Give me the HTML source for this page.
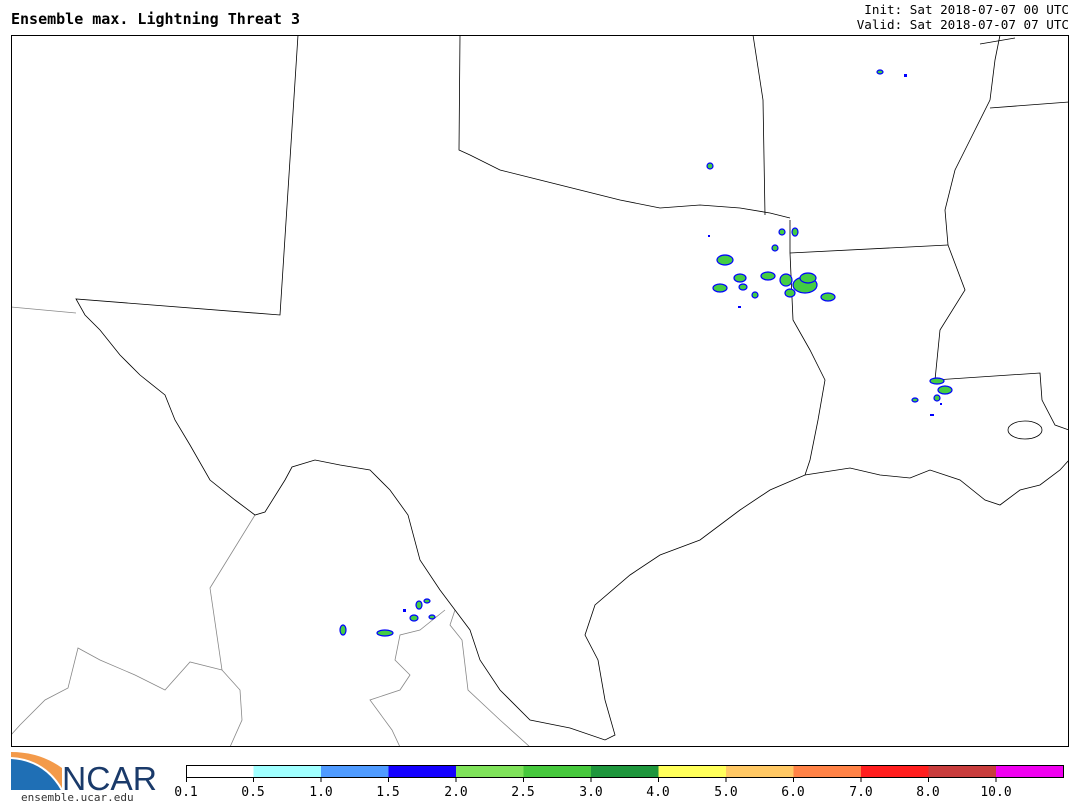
<!DOCTYPE html>
<html><head><meta charset="utf-8"><style>
body{margin:0;background:#fff;width:1080px;height:810px;overflow:hidden;position:relative;font-family:"DejaVu Sans Mono","Liberation Mono",monospace}
.t{position:absolute;font-size:14px;white-space:pre}
</style></head><body>
<div class="t" style="left:11px;top:10px;font-weight:bold;font-size:15px">Ensemble max. Lightning Threat 3</div>
<div class="t" style="right:11px;top:2px;font-size:12.6px;line-height:15px;text-align:right">Init: Sat 2018-07-07 00 UTC
Valid: Sat 2018-07-07 07 UTC</div>
<svg width="1080" height="810" style="position:absolute;left:0;top:0" xmlns="http://www.w3.org/2000/svg">
<defs><clipPath id="c"><rect x="11" y="35" width="1058" height="712"/></clipPath></defs>
<g clip-path="url(#c)" fill="none" stroke-width="0.8">
<g stroke="#888">
<polyline points="11,307 76,313"/>
<polyline points="255,515 210,588 222,670"/>
<polyline points="222,670 190,662 165,690 135,675 100,660 78,648 68,688 45,700 20,725 11,735"/>
<polyline points="222,670 240,690 242,720 230,747"/>
<polyline points="455,610 450,625 462,640 468,690 500,720 530,747"/>
<polyline points="445,610 420,630 400,635 395,660 410,675 400,690 370,700 392,730 400,747"/>
</g>
<g stroke="#000">
<polyline points="298,35 280,315 76,299 85,315 100,330 120,355 140,375 165,395 175,420 190,445 210,480 235,500 255,515 265,512 285,480 292,467 315,460 340,465 370,470 390,490 408,515 420,560 440,590 455,610 470,630 480,660 500,690 530,720 570,728 605,740 615,735 605,700 598,660 585,635 595,605 630,575 660,555 700,540 740,510 770,490 805,475 850,468 880,475 910,478 930,470 960,480 985,500 1000,505 1020,490 1040,485 1060,470 1069,460"/>
<polyline points="805,475 810,460 818,420 825,380 810,350 793,320 790,253 790,220"/>
<polyline points="790,218 770,213 740,208 700,205 660,208 620,200 580,190 540,180 500,170 470,155 459,150 460,35"/>
<polyline points="753,35 763,100 765,215"/>
<polyline points="790,253 948,245"/>
<polyline points="948,245 945,210 955,170 975,130 990,100 995,60 1000,35"/>
<polyline points="990,108 1069,102"/>
<polyline points="980,44 1015,38"/>
<polyline points="948,245 965,290 940,330 935,380 1040,373 1042,400 1055,425 1069,430"/>
<ellipse cx="1025" cy="430" rx="17" ry="9"/>
</g>
</g>
<g stroke="#00f" stroke-width="1.2" fill="#4c4">
<ellipse cx="725" cy="260" rx="8" ry="5"/><ellipse cx="740" cy="278" rx="6" ry="4"/><ellipse cx="720" cy="288" rx="7" ry="4"/>
<ellipse cx="768" cy="276" rx="7" ry="4"/><ellipse cx="786" cy="280" rx="6" ry="6"/><ellipse cx="805" cy="285" rx="12" ry="8"/>
<ellipse cx="828" cy="297" rx="7" ry="4"/><ellipse cx="808" cy="278" rx="8" ry="5"/><ellipse cx="775" cy="248" rx="3" ry="3"/>
<ellipse cx="795" cy="232" rx="3" ry="4"/><ellipse cx="782" cy="232" rx="3" ry="3"/><ellipse cx="755" cy="295" rx="3" ry="3"/>
<ellipse cx="790" cy="293" rx="5" ry="4"/><ellipse cx="743" cy="287" rx="4" ry="3"/><ellipse cx="710" cy="166" rx="3" ry="3"/>
<ellipse cx="880" cy="72" rx="3" ry="2"/><ellipse cx="937" cy="381" rx="7" ry="3"/><ellipse cx="945" cy="390" rx="7" ry="4"/>
<ellipse cx="915" cy="400" rx="3" ry="2"/><ellipse cx="937" cy="398" rx="3" ry="3"/>
<ellipse cx="385" cy="633" rx="8" ry="3"/><ellipse cx="414" cy="618" rx="4" ry="3"/><ellipse cx="419" cy="605" rx="3" ry="4"/>
<ellipse cx="343" cy="630" rx="3" ry="5"/><ellipse cx="427" cy="601" rx="3" ry="2"/><ellipse cx="432" cy="617" rx="3" ry="2"/>
</g>
<g fill="#00f"><rect x="904" y="74" width="3" height="3"/><rect x="403" y="609" width="3" height="3"/><rect x="738" y="306" width="3" height="2"/><rect x="708" y="235" width="2" height="2"/><rect x="930" y="414" width="4" height="2"/><rect x="940" y="403" width="2" height="2"/></g>
<rect x="11.5" y="35.5" width="1057" height="711" fill="none" stroke="#000" stroke-width="1"/>
<g stroke="none">
<rect x="186" y="765" width="67.5" height="13" fill="#fff"/>
<rect x="253.5" y="765" width="67.5" height="13" fill="#a0ffff"/>
<rect x="321" y="765" width="67.5" height="13" fill="#4f9bff"/>
<rect x="388.5" y="765" width="67.5" height="13" fill="#1400ff"/>
<rect x="456" y="765" width="67.5" height="13" fill="#7fe25a"/>
<rect x="523.5" y="765" width="67.5" height="13" fill="#46c83c"/>
<rect x="591" y="765" width="67.5" height="13" fill="#1e963c"/>
<rect x="658.5" y="765" width="67.5" height="13" fill="#ffff5a"/>
<rect x="726" y="765" width="67.5" height="13" fill="#ffc864"/>
<rect x="793.5" y="765" width="67.5" height="13" fill="#ff8246"/>
<rect x="861" y="765" width="67.5" height="13" fill="#ff1e1e"/>
<rect x="928.5" y="765" width="67.5" height="13" fill="#c83c3c"/>
<rect x="996" y="765" width="68" height="13" fill="#f000f0"/>
</g>
<rect x="186.5" y="765.5" width="877" height="12" fill="none" stroke="#000"/>
<g stroke="#000"><line x1="186.5" y1="778" x2="186.5" y2="782"/><line x1="253.5" y1="778" x2="253.5" y2="782"/><line x1="321" y1="778" x2="321" y2="782"/><line x1="388.5" y1="778" x2="388.5" y2="782"/><line x1="456" y1="778" x2="456" y2="782"/><line x1="523.5" y1="778" x2="523.5" y2="782"/><line x1="591" y1="778" x2="591" y2="782"/><line x1="658.5" y1="778" x2="658.5" y2="782"/><line x1="726" y1="778" x2="726" y2="782"/><line x1="793.5" y1="778" x2="793.5" y2="782"/><line x1="861" y1="778" x2="861" y2="782"/><line x1="928.5" y1="778" x2="928.5" y2="782"/><line x1="996" y1="778" x2="996" y2="782"/></g>
<g font-family="DejaVu Sans Mono, monospace" font-size="13" text-anchor="middle" fill="#000">
<text x="186" y="796">0.1</text><text x="253" y="796">0.5</text><text x="321" y="796">1.0</text><text x="388" y="796">1.5</text><text x="456" y="796">2.0</text><text x="523" y="796">2.5</text><text x="591" y="796">3.0</text><text x="658" y="796">4.0</text><text x="726" y="796">5.0</text><text x="793" y="796">6.0</text><text x="861" y="796">7.0</text><text x="928" y="796">8.0</text><text x="996" y="796">10.0</text>
</g>
<path d="M11,752 Q45,758 62,790 L11,790 Z" fill="#1f6fb5"/>
<path d="M11,752 Q40,752 62,768 L62,790 Q45,758 11,758Z" fill="#f39a4a"/>
<path d="M11,758 Q45,760 62,790" fill="none" stroke="#fff" stroke-width="2"/>
<text x="62" y="790" font-family="Liberation Sans, sans-serif" font-size="33" fill="#1a3a6a" textLength="95" lengthAdjust="spacingAndGlyphs">NCAR</text>
<text x="21" y="801" font-family="DejaVu Sans Mono, monospace" font-size="11" fill="#333">ensemble.ucar.edu</text>
</svg>
</body></html>
